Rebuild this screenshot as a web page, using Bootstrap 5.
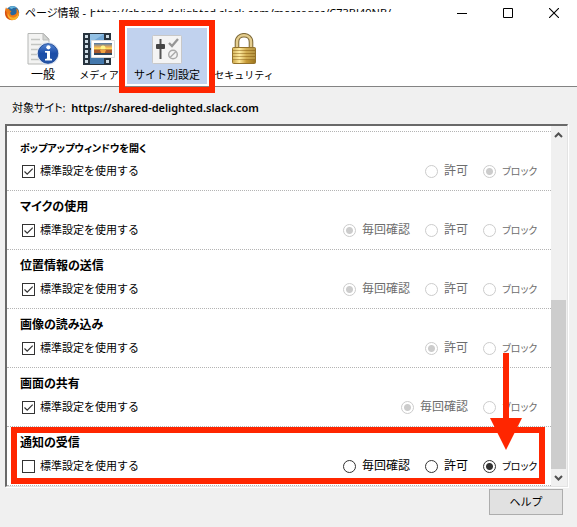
<!DOCTYPE html>
<html lang="ja">
<head>
<meta charset="utf-8">
<meta name="viewport" content="width=device-width, initial-scale=1">
<title>ページ情報</title>
<link href="https://cdn.jsdelivr.net/npm/bootstrap@5.3.0/dist/css/bootstrap.min.css" rel="stylesheet">
<style>
body { font: 12px/18px "Noto Sans", "Noto Sans CJK JP", sans-serif; font-feature-settings: "palt"; color: #000; background: #f0f0f0; }
svg { display: block; flex: none; }
.text-11 { font-size: 11px; }
.text-10 { font-size: 10px; }
.titlebar { height: 26px; padding-left: 4px; }
.win-title { font-size: 11px; padding-left: 5px; }
.redacted { position: relative; padding-left: 4px; }
.redacted::after { content: ""; position: absolute; inset: 8px 0 0 7px; background: #fff; }
.win-btn { width: 46px; height: 25px; padding: 0; border: 0; background: none; display: flex; align-items: center; justify-content: center; }
.toolbar { height: 61px; padding: 2px 0 2px 15px; border-bottom: 1px solid #838383; }
.tool { border: 0; background: none; padding: 5px 0 0; min-width: 56px; height: 56px; display: flex; flex-direction: column; align-items: center; color: #000; white-space: nowrap; }
.tool svg { margin-bottom: 1px; }
.tool-wide { width: 80px; background: #c1d2ee; }
.tool-end { width: 74px; }
.frame { position: absolute; border: 6px solid #ff2600; pointer-events: none; z-index: 2; }
.frame-tab { inset: -8px -8px -9px -8px; }
.frame-row { inset: 0 6px 1px 4px; }
.site { padding: 12px 12px 8px; font-size: 11px; line-height: 17px; }
.site strong { font-weight: 600; padding-left: 3px; }
.permbox { margin: 0 9px 0 5px; border: 1px solid #e3e3e3; border-top: 2px solid #696969; border-left: 2px solid #696969; background: #fff; box-shadow: 1px 1px #fff; }
.perms { padding-top: 5px; }
.perm { height: 59px; border-top: 1px dotted #b4b4b4; padding: 7px 13px 0 13px; position: relative; }
.perm:last-child { height: 60px; border-bottom: 1px dotted #b4b4b4; }
.perm h2 { font-size: 12px; line-height: 18px; font-weight: 700; margin: 0 0 5px; }
.perm h2.text-10 { font-size: 10px; }
.perm label { padding-left: 5px; color: #000; }
.use-default { font-size: 11px; font-feature-settings: normal; }
.choice { gap: 15px; }
.choice label { padding-left: 6px; }
.choice .last-choice { min-width: 42px; font-size: 10px; }
.perm .form-check-input { width: 13px; height: 13px; margin: 0 0 0 2px; border: 1px solid #333; background-color: #fff; float: none; flex: none; box-shadow: none; }
.perm .form-check-input[type=checkbox] { border-radius: 0; }
.perm .form-check-input[type=checkbox]:checked { background: #fff url("data:image/svg+xml,%3Csvg xmlns='http://www.w3.org/2000/svg' viewBox='0 0 11 11'%3E%3Cpath d='M1.5 5.5 4.2 8.2 9.7 2.7' fill='none' stroke='%23333' stroke-width='1.2'/%3E%3C/svg%3E") center/11px; }
.perm .form-check-input[type=radio] { margin: 0; }
.perm .form-check-input[type=radio]:checked { background: #fff radial-gradient(circle, #333 0 3px, transparent 4px); }
.perm .form-check-input:disabled { border-color: #ccc; opacity: 1; }
.perm .form-check-input[type=radio]:checked:disabled { background: #fff radial-gradient(circle, #ccc 0 3px, transparent 4px); }
.perm .form-check-input:disabled ~ label { color: #6d6d6d; opacity: 1; }
.arrow { position: absolute; right: 29px; bottom: 35px; z-index: 3; }
.scroller { width: 16px; background: #f0f0f0; flex: none; }
.scroller svg { margin: 6px auto 5px 3px; }
.thumb { width: 15px; height: 47%; background: #cdcdcd; }
.help { width: 74px; height: 26px; margin: 2px 14px 10px 0; padding: 0; border: 1px solid #adadad; background: #e1e1e1; color: #000; }
</style>
</head>
<body>
<header class="bg-white">
  <div class="titlebar d-flex align-items-center">
    <svg width="16" height="16" viewBox="0 0 16 16" aria-hidden="true">
      <circle cx="8.5" cy="7.8" r="6.7" fill="#27679f"/>
      <path d="M5 3c2-2.500 6-2.400 8 .200-2-.700-4-.600-5 .800z" fill="#65b7dd"/>
      <path d="M2 2.200 3.100 4 5 3.800 5.700 5.500 7.500 6 6.300 7.500C6 10 8.500 11 11 9.500c2-1.200 2-4 1-6.200 2.500 1.500 3.700 5 2.400 7.900-1.800 4-7.600 5.400-11.100 2.400C.400 11 .3 6 2 2.200z" fill="#ee7b16"/>
      <path d="M13 4c2 3 1.200 7-2 8.300-3 1.200-6.500-.6-7-4.300-.8 3 .3 5.500 3 6.600 4 1.500 8-1.500 7.500-6.200z" fill="#f9b52c"/>
      <path d="M1.500 5.500c-1 4 1 8.500 5.300 9.300C3.500 13 2 10 2.400 7z" fill="#cd3e18"/>
    </svg>
    <div class="win-title d-flex flex-grow-1 text-nowrap"><span>ページ情報 -</span><span class="redacted">https://shared-delighted.slack.com/messages/C73BJ49NB/</span></div>
    <button class="win-btn" type="button" aria-label="最小化"><svg width="10" height="10"><path d="M0 5.500h10" stroke="#000"/></svg></button>
    <button class="win-btn" type="button" aria-label="最大化"><svg width="10" height="10"><path d="M.5.500h9v9h-9z" fill="none" stroke="#000"/></svg></button>
    <button class="win-btn" type="button" aria-label="閉じる"><svg width="10" height="10"><path d="m0 0 10 10M10 0 0 10" stroke="#000" stroke-width="1.100"/></svg></button>
  </div>
  <nav class="toolbar d-flex" aria-label="ページ情報">
    <button class="tool" type="button">
      <svg width="32" height="32" viewBox="0 0 32 32" aria-hidden="true">
        <defs><linearGradient id="info" x2="0" y2="1"><stop stop-color="#5788d5"/><stop offset=".5" stop-color="#1b4da8"/><stop offset="1" stop-color="#2456a8"/></linearGradient></defs>
        <path d="M1 .5h15.500L22 6v25H1z" fill="#f3f3f2" stroke="#b5b7b5"/>
        <path d="M16 .5V7h6z" fill="#d2d5d2" stroke="#bbb"/>
        <path d="M4 6.500h9M4 11.500h15M4 16.500h15M4 21.500h15M4 26.500h15" stroke="#c3c5c2" stroke-width="1.500"/>
        <circle cx="21" cy="20.500" r="10.500" fill="url(#info)" stroke="#dce4f1" stroke-width="1.300"/>
        <circle cx="21" cy="20.500" r="9.800" fill="none" stroke="#234f9c"/>
        <circle cx="21.400" cy="14.300" r="2.100" fill="#fff"/>
        <path d="M18 18h5v7.500l2 .5v1.500h-7V26l2-.5v-5.700l-2-.4z" fill="#fff"/>
      </svg>
      <span>一般</span>
    </button>
    <button class="tool" type="button">
      <svg width="32" height="32" viewBox="0 0 32 32" aria-hidden="true">
        <defs><linearGradient id="sky" x2="0" y2="1"><stop stop-color="#4d78aa"/><stop offset=".35" stop-color="#f5b352"/><stop offset=".52" stop-color="#ffef69"/><stop offset=".6" stop-color="#c96b20"/><stop offset="1" stop-color="#233e58"/></linearGradient></defs>
        <path d="M0 0h28v32H0z" fill="#27333e"/>
        <path d="M7 1h14v14H7z" fill="#71a6d5"/><path d="M7 1h14L7 10z" fill="#93c1e5"/><path d="M7 17h14v14H7z" fill="#4378ad"/>
        <path d="M3.500 2v29M24.500 2v29" stroke="#cfdce5" stroke-width="3" stroke-dasharray="3 2"/>
        <path d="M8.500 7.500h23v17h-23z" fill="#fff" stroke="#ddd"/>
        <path d="M11 10h18v12H11z" fill="url(#sky)"/><circle cx="20" cy="15" r="2.500" fill="#fff58a"/><path d="M11 16.500h18V22H11z" fill="#a7582d"/><path d="M17 17h6l-2 5h-2z" fill="#f3a340"/><path d="M11 20h18v2H11z" fill="#31465b"/>
      </svg>
      <span class="text-10">メディア</span>
    </button>
    <div class="position-relative">
      <button class="tool tool-wide" type="button" aria-current="page">
        <svg width="32" height="32" viewBox="0 0 32 32" aria-hidden="true">
          <rect x="1.500" y="2.500" width="29" height="28" rx="1" fill="#f4f4f4" stroke="#c8c8c8"/>
          <path d="M9.500 6v20" stroke="#555" stroke-width="2"/><rect x="5" y="11" width="9" height="5" rx="1" fill="#454545"/>
          <path d="m18 10 3 3 6-7" fill="none" stroke="#969696" stroke-width="2.300"/>
          <circle cx="22" cy="21.500" r="4.300" fill="none" stroke="#aaa" stroke-width="1.500"/><path d="m19 24.500 6-6" stroke="#aaa" stroke-width="1.500"/>
        </svg>
        <span class="text-11">サイト別設定</span>
      </button>
      <div class="frame frame-tab"></div>
    </div>
    <button class="tool tool-end" type="button">
      <svg width="32" height="32" viewBox="0 0 32 32" aria-hidden="true">
        <defs><linearGradient id="gold"><stop stop-color="#c9a344"/><stop offset=".3" stop-color="#ffe99a"/><stop offset=".6" stop-color="#c89b37"/><stop offset="1" stop-color="#9a741e"/></linearGradient></defs>
        <path d="M9 17V9c0-9 14-9 14 0v8" fill="none" stroke="#7f6a38" stroke-width="4.600"/>
        <path d="M9 17V9c0-9 14-9 14 0v8" fill="none" stroke="#e4cd8e" stroke-width="2.500"/>
        <rect x="4.500" y="14.500" width="23" height="16" rx="1" fill="url(#gold)" stroke="#94722b"/>
        <path d="M5 17.500h22M5 20.500h22M5 23.500h22M5 26.500h22" stroke="#96702a" stroke-opacity=".55"/><path d="M5 16h22M5 19h22M5 22h22M5 25h22" stroke="#fff4b8" stroke-opacity=".45"/>
      </svg>
      <span class="text-10">セキュリティ</span>
    </button>
  </nav>
</header>
<main>
  <div class="site">対象サイト: <strong>https://shared-delighted.slack.com</strong></div>
  <div class="permbox d-flex">
    <div class="perms flex-grow-1">
      <section class="perm">
        <h2 class="text-10">ポップアップウィンドウを開く</h2>
        <div class="d-flex justify-content-between">
          <div class="d-flex align-items-center"><input class="form-check-input" type="checkbox" id="d1" checked><label class="use-default" for="d1">標準設定を使用する</label></div>
          <div class="choice d-flex">
            <div class="d-flex align-items-center"><input class="form-check-input" type="radio" name="r1" id="r1b" disabled><label for="r1b">許可</label></div>
            <div class="d-flex align-items-center"><input class="form-check-input" type="radio" name="r1" id="r1c" checked disabled><label class="last-choice" for="r1c">ブロック</label></div>
          </div>
        </div>
      </section>
      <section class="perm">
        <h2>マイクの使用</h2>
        <div class="d-flex justify-content-between">
          <div class="d-flex align-items-center"><input class="form-check-input" type="checkbox" id="d2" checked><label class="use-default" for="d2">標準設定を使用する</label></div>
          <div class="choice d-flex">
            <div class="d-flex align-items-center"><input class="form-check-input" type="radio" name="r2" id="r2a" checked disabled><label for="r2a">毎回確認</label></div>
            <div class="d-flex align-items-center"><input class="form-check-input" type="radio" name="r2" id="r2b" disabled><label for="r2b">許可</label></div>
            <div class="d-flex align-items-center"><input class="form-check-input" type="radio" name="r2" id="r2c" disabled><label class="last-choice" for="r2c">ブロック</label></div>
          </div>
        </div>
      </section>
      <section class="perm">
        <h2>位置情報の送信</h2>
        <div class="d-flex justify-content-between">
          <div class="d-flex align-items-center"><input class="form-check-input" type="checkbox" id="d3" checked><label class="use-default" for="d3">標準設定を使用する</label></div>
          <div class="choice d-flex">
            <div class="d-flex align-items-center"><input class="form-check-input" type="radio" name="r3" id="r3a" checked disabled><label for="r3a">毎回確認</label></div>
            <div class="d-flex align-items-center"><input class="form-check-input" type="radio" name="r3" id="r3b" disabled><label for="r3b">許可</label></div>
            <div class="d-flex align-items-center"><input class="form-check-input" type="radio" name="r3" id="r3c" disabled><label class="last-choice" for="r3c">ブロック</label></div>
          </div>
        </div>
      </section>
      <section class="perm">
        <h2>画像の読み込み</h2>
        <div class="d-flex justify-content-between">
          <div class="d-flex align-items-center"><input class="form-check-input" type="checkbox" id="d4" checked><label class="use-default" for="d4">標準設定を使用する</label></div>
          <div class="choice d-flex">
            <div class="d-flex align-items-center"><input class="form-check-input" type="radio" name="r4" id="r4b" checked disabled><label for="r4b">許可</label></div>
            <div class="d-flex align-items-center"><input class="form-check-input" type="radio" name="r4" id="r4c" disabled><label class="last-choice" for="r4c">ブロック</label></div>
          </div>
        </div>
      </section>
      <section class="perm">
        <h2>画面の共有</h2>
        <div class="d-flex justify-content-between">
          <div class="d-flex align-items-center"><input class="form-check-input" type="checkbox" id="d5" checked><label class="use-default" for="d5">標準設定を使用する</label></div>
          <div class="choice d-flex">
            <div class="d-flex align-items-center"><input class="form-check-input" type="radio" name="r5" id="r5a" checked disabled><label for="r5a">毎回確認</label></div>
            <div class="d-flex align-items-center"><input class="form-check-input" type="radio" name="r5" id="r5c" disabled><label class="last-choice" for="r5c">ブロック</label></div>
          </div>
        </div>
      </section>
      <section class="perm">
        <h2>通知の受信</h2>
        <div class="d-flex justify-content-between">
          <div class="d-flex align-items-center"><input class="form-check-input" type="checkbox" id="d6"><label class="use-default" for="d6">標準設定を使用する</label></div>
          <div class="choice d-flex">
            <div class="d-flex align-items-center"><input class="form-check-input" type="radio" name="r6" id="r6a"><label for="r6a">毎回確認</label></div>
            <div class="d-flex align-items-center"><input class="form-check-input" type="radio" name="r6" id="r6b"><label for="r6b">許可</label></div>
            <div class="d-flex align-items-center"><input class="form-check-input" type="radio" name="r6" id="r6c" checked><label class="last-choice" for="r6c">ブロック</label></div>
          </div>
        </div>
        <div class="frame frame-row"></div>
        <svg class="arrow" width="32" height="97" viewBox="0 0 32 97" aria-hidden="true"><path d="M13 0h6v65h13L16 97 0 65h13z" fill="#ff2600"/></svg>
      </section>
    </div>
    <div class="scroller d-flex flex-column" aria-hidden="true">
      <svg width="9" height="6"><path d="m1 5 3.500-3.500L8 5" fill="none" stroke="#505050" stroke-width="2"/></svg>
      <div class="thumb mt-auto"></div>
      <svg width="9" height="6"><path d="m1 1 3.500 3.500L8 1" fill="none" stroke="#505050" stroke-width="2"/></svg>
    </div>
  </div>
  <div class="d-flex justify-content-end"><button class="help text-11" type="button">ヘルプ</button></div>
</main>
<script src="https://cdn.jsdelivr.net/npm/bootstrap@5.3.0/dist/js/bootstrap.bundle.min.js"></script>
</body>
</html>
